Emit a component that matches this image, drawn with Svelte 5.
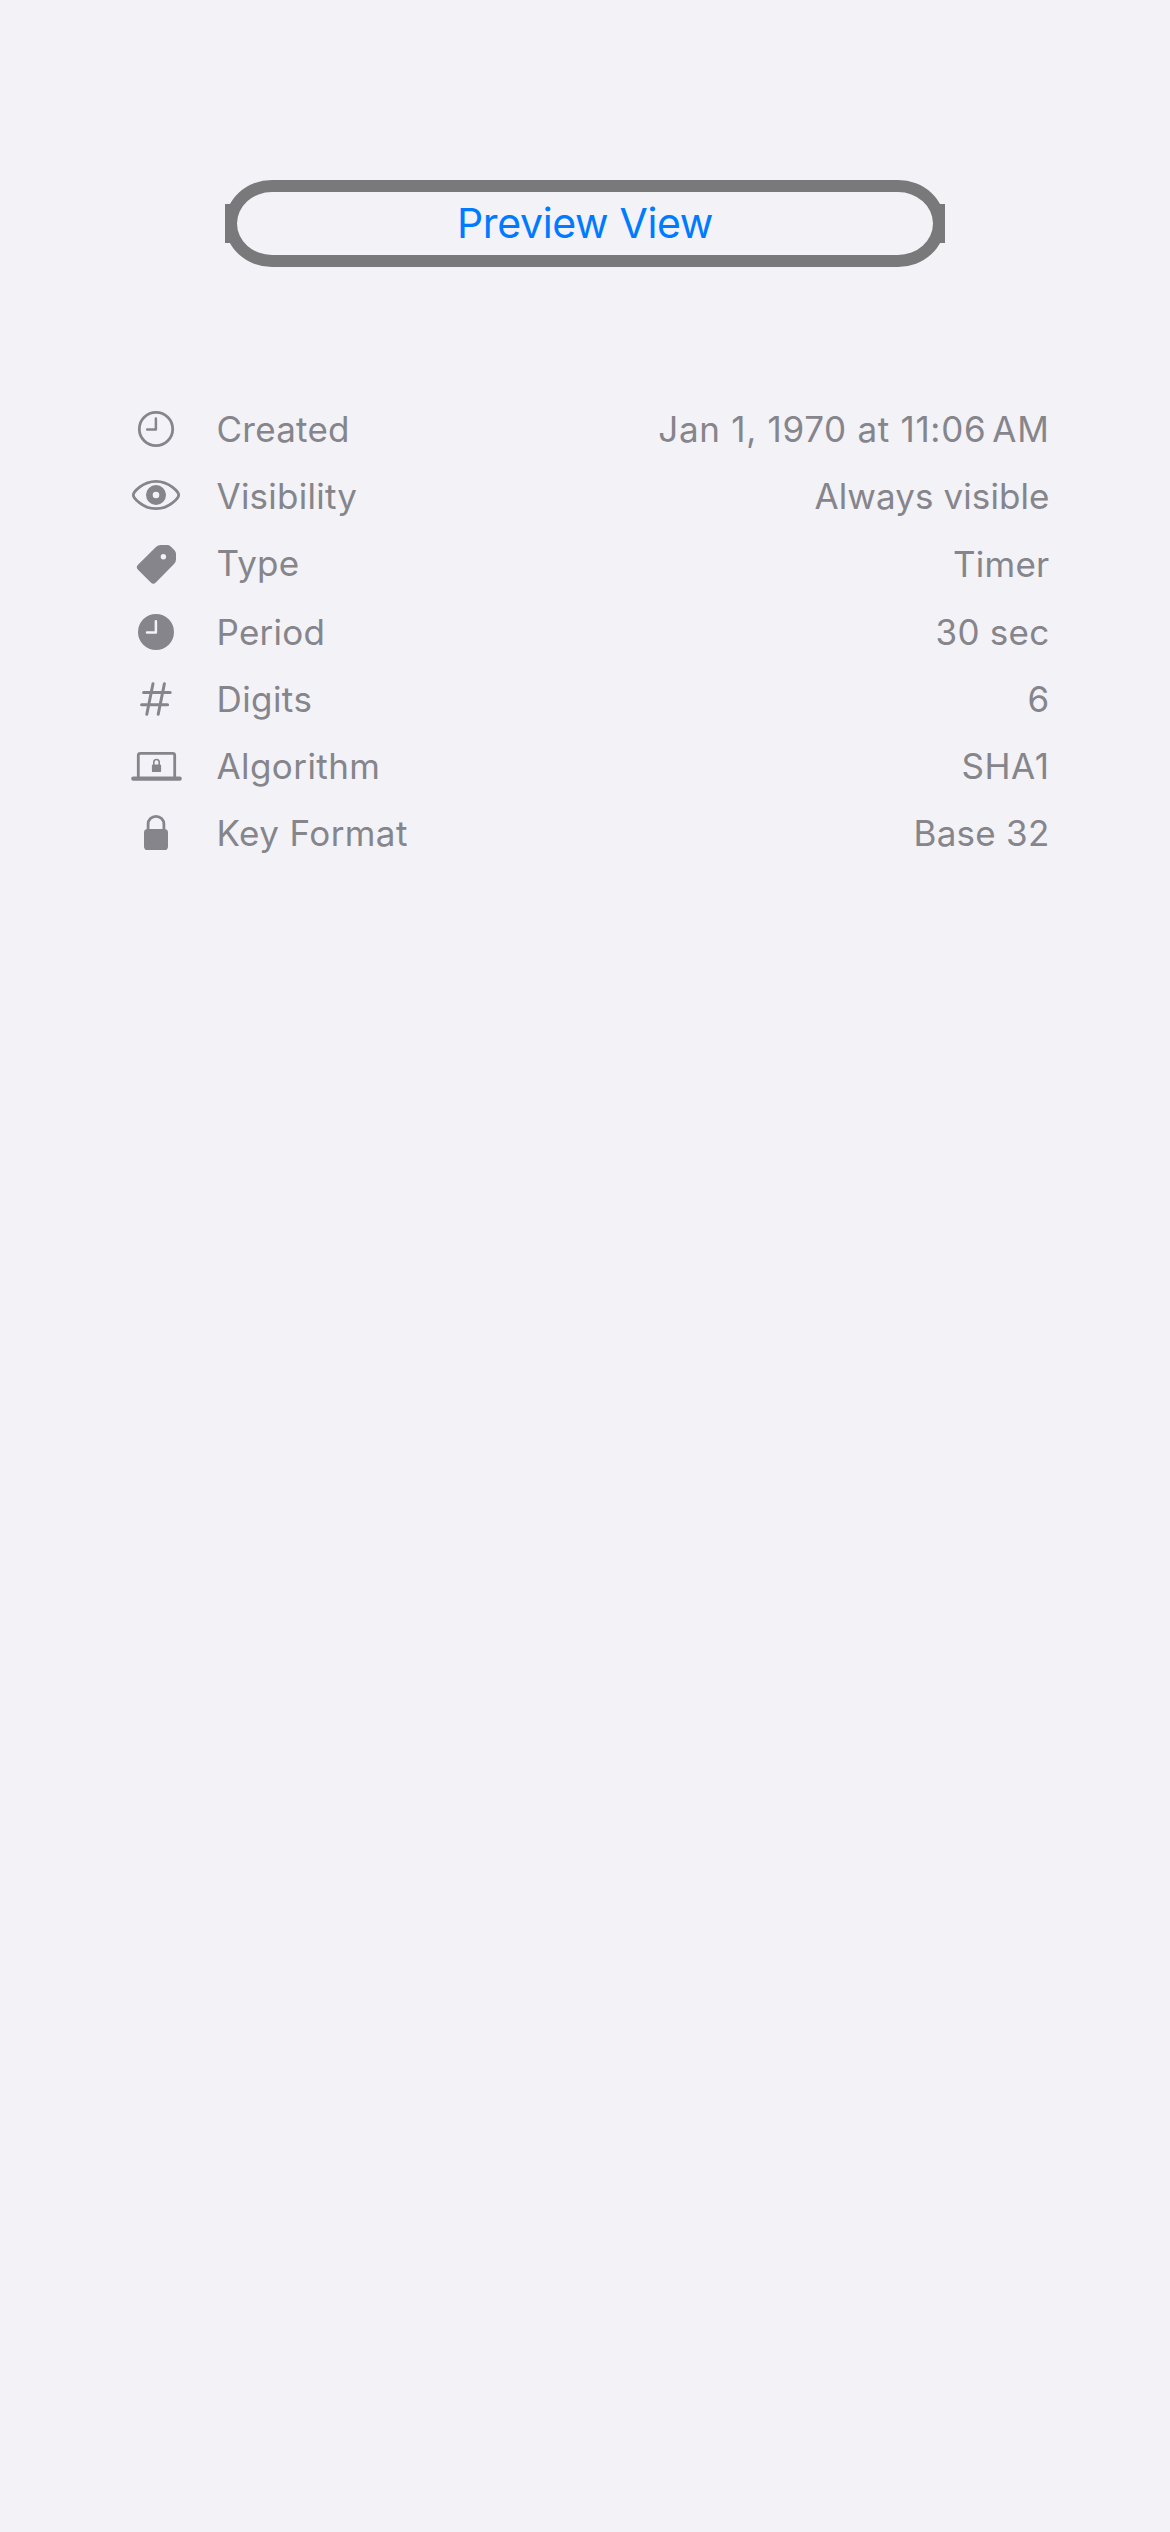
<script>
  const rows = [
    { icon: 'clock', label: 'Created', value: 'Jan 1, 1970 at 11:06', suffix: 'AM' },
    { icon: 'eye', label: 'Visibility', value: 'Always visible' },
    { icon: 'tag', label: 'Type', value: 'Timer' },
    { icon: 'clock-fill', label: 'Period', value: '30 sec' },
    { icon: 'number', label: 'Digits', value: '6' },
    { icon: 'laptop', label: 'Algorithm', value: 'SHA1' },
    { icon: 'lock', label: 'Key Format', value: 'Base 32' }
  ];
</script>

<main>
  <button class="preview">Preview View</button>

  <section class="details">
    {#each rows as row}
      <div class="row {row.icon}">
        <svg class="icon" viewBox="0 0 54 67" aria-hidden="true">
          {#if row.icon === 'clock'}
            <circle class="line" cx="27" cy="33" r="16.7" stroke-width="2.8" />
            <path class="line" d="M26.9 22.5V33.4H18.2" stroke-width="2.5" />
          {:else if row.icon === 'eye'}
            <path class="line" d="M4.3 32C4.3 29.3 13.5 18.3 27 18.3S49.7 29.3 49.7 32S40.5 45.7 27 45.7S4.3 34.7 4.3 32Z" stroke-width="2.8" />
            <circle class="line" cx="27" cy="32" r="6.65" stroke-width="6.7" />
          {:else if row.icon === 'tag'}
            <path class="solid" fill-rule="evenodd" d="M31.5 15H38Q40.2 15 41.7 16.4L45.5 20.2Q47 21.7 47 23.8V29.5Q47 32 45 34L26.8 52.4Q24.3 54.9 21.8 52.4L9 39.8Q6.5 37.3 9 34.8L27.2 16.8Q29 15 31.5 15ZM34.4 24a2.7 2.7 0 1 1 0 5.4a2.7 2.7 0 1 1 0-5.4Z" />
          {:else if row.icon === 'clock-fill'}
            <circle class="solid" cx="27" cy="33" r="18" />
            <path class="line cut" d="M26.9 22.2V33.4H18" stroke-width="2.5" />
          {:else if row.icon === 'number'}
            <path class="line" d="M24 17.8L17.8 48.3M35.4 17.8L29.2 48.3M14.6 26.4H41.2M12.6 38.7H38.6" stroke-width="3" />
          {:else if row.icon === 'laptop'}
            <path class="line" d="M9.3 44V22.3Q9.3 20.3 11.3 20.3H43.7Q45.7 20.3 45.7 22.3V44" stroke-width="2.8" />
            <rect class="solid" x="2.2" y="43.6" width="50.6" height="4.2" rx="2" />
            <rect class="solid" x="22.9" y="31.4" width="9.2" height="7.7" rx="1.2" />
            <path class="line" d="M24.8 32V29.2a2.7 2.7 0 0 1 5.4 0V32" stroke-width="1.6" />
          {:else}
            <rect class="solid" x="15" y="29" width="24" height="21" rx="3.6" />
            <path class="line" d="M19.1 30V24.2a7.9 7.9 0 0 1 15.8 0V30" stroke-width="2.8" />
          {/if}
        </svg>
        <span class="label">{row.label}</span>
        <span class="value">{row.value}{#if row.suffix}<span class="suffix">{row.suffix}</span>{/if}</span>
      </div>
    {/each}
  </section>
</main>

<style>
  :global(body) {
    background: #f2f2f7;
  }

  main {
    box-sizing: border-box;
    min-height: 2532px;
    padding: 180px 120px 0 129px;
    font-family: Inter, 'Liberation Sans', sans-serif;
    background: #f2f2f7;
  }

  .preview {
    position: relative;
    display: block;
    box-sizing: border-box;
    width: 720px;
    height: 87px;
    margin: 0 0 129px 96px;
    padding: 0;
    border: 12px solid #79797b;
    border-radius: 47px / 43.5px;
    background: transparent;
    color: #007aff;
    font: 400 41px/63px Inter, 'Liberation Sans', sans-serif;
    letter-spacing: -0.35px;
  }

  /* Square tabs on both ends of the capsule */
  .preview::before,
  .preview::after {
    content: '';
    position: absolute;
    top: 11.5px;
    left: -12px;
    width: 8px;
    height: 39.5px;
    background: #79797b;
  }

  .preview::after {
    left: auto;
    right: -12px;
  }

  .row {
    display: flex;
    align-items: center;
    height: 67px;
    color: #85858b;
    font-size: 35px;
    line-height: 67px;
    letter-spacing: 0.25px;
    white-space: pre;
  }

  .row.tag {
    height: 69px;
  }

  .row.tag .icon,
  .row.tag .label {
    margin-bottom: 2px;
  }

  .icon {
    flex: none;
    width: 54px;
    height: 67px;
  }

  .label {
    margin-left: 33.5px;
  }

  .number .label,
  .laptop .label,
  .lock .label {
    letter-spacing: 0.42px;
  }

  .value {
    margin-left: auto;
    margin-right: 0.5px;
  }

  .clock .value {
    letter-spacing: 0.7px;
  }

  .eye .value {
    letter-spacing: 0.08px;
  }

  .laptop .value {
    letter-spacing: 0.6px;
  }

  .suffix {
    margin-left: 6px;
  }

  .solid {
    fill: #85858b;
  }

  .line {
    fill: none;
    stroke: #85858b;
    stroke-linecap: round;
    stroke-linejoin: round;
  }

  .cut {
    stroke: #f2f2f7;
  }
</style>
